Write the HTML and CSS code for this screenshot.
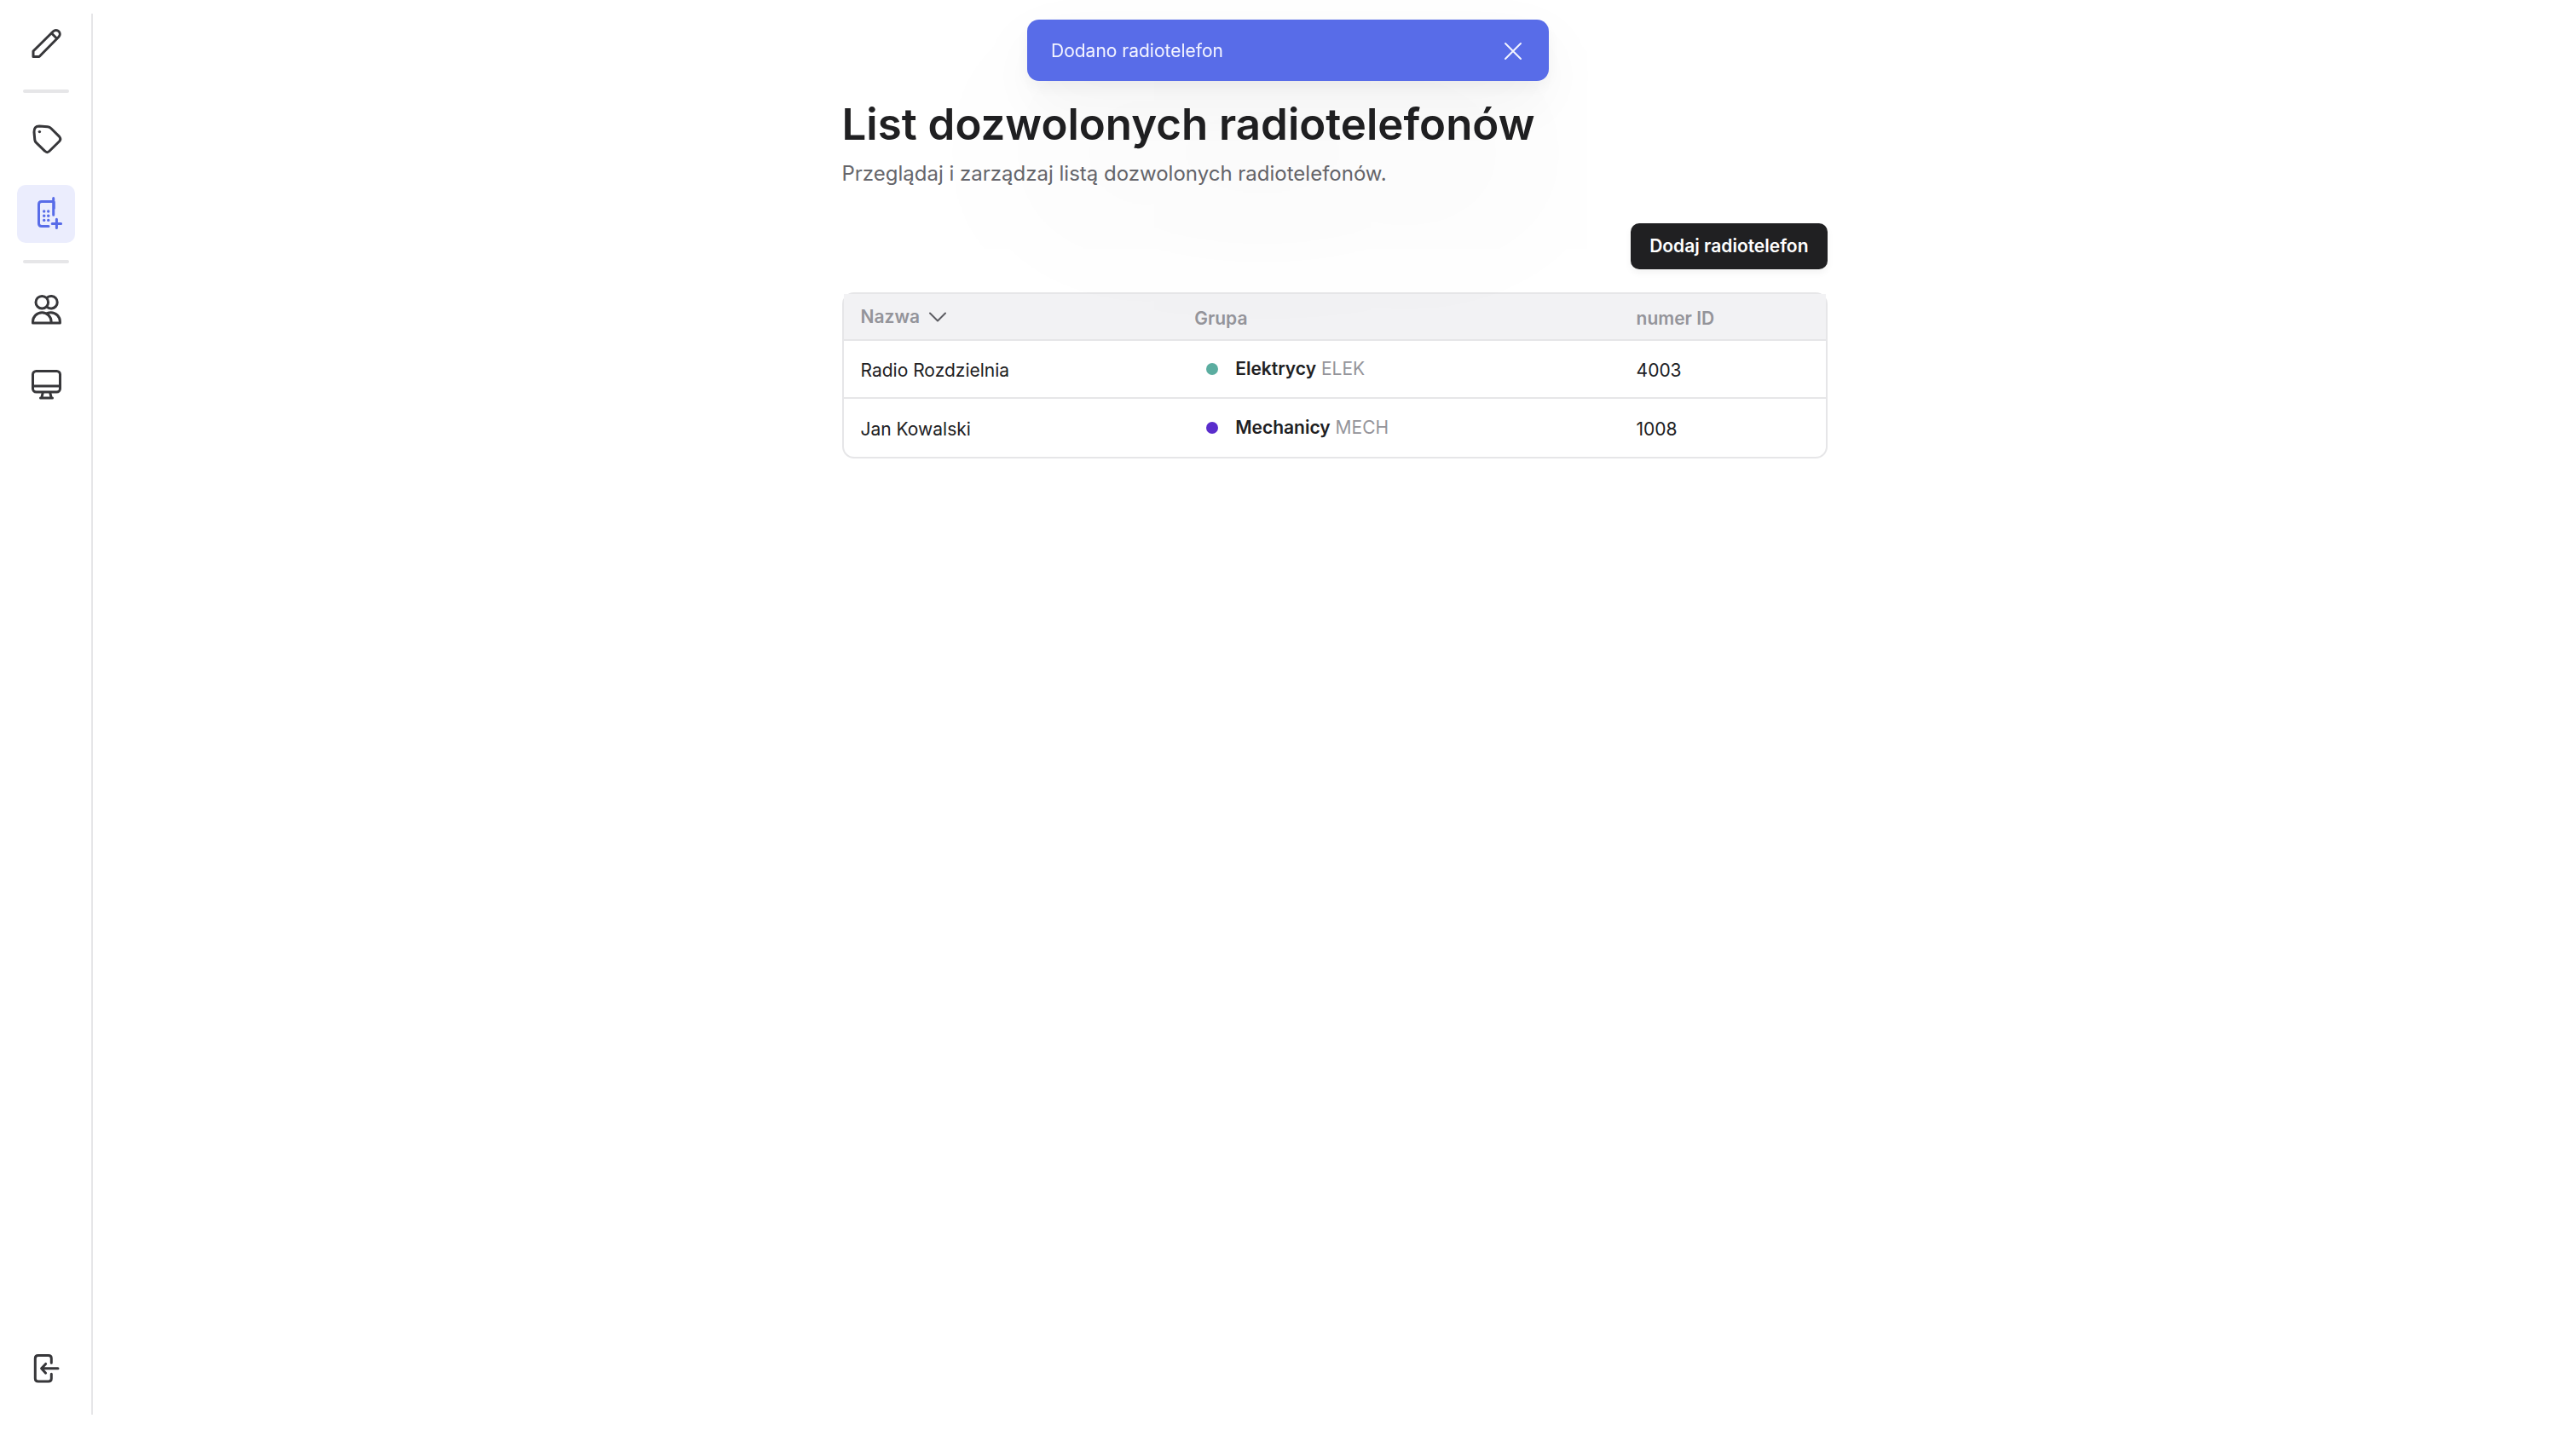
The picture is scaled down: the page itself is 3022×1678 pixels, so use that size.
FILE: index.html
```html
<!DOCTYPE html>
<html lang="pl">
<head>
<meta charset="utf-8">
<meta name="viewport" content="width=device-width, initial-scale=1">
<title>Radiotelefony</title>
<link rel="stylesheet" href="styles.css">
</head>
<body>
<div class="app">
  <nav class="sidebar" aria-label="Menu">
    <a class="nav-item" href="#edit" aria-label="Edycja">
      <svg class="icon" viewBox="0 0 40 40"><path d="M5 35.5V29L28.5 5.8A4.5 4.5 0 0 1 34.9 12.2L12 35.5Z"/><path d="M26.5 8L32.5 14"/></svg>
    </a>
    <hr class="divider">
    <a class="nav-item" href="#groups" aria-label="Grupy">
      <svg class="icon" viewBox="0 0 40 40"><path d="M12 5L22 5.8Q24.3 6 26 7.7L35.7 17.4Q38 20.2 35.7 22.7L24 34.3Q21.3 37 18.7 34.3L8.7 24.7Q7 23 6.8 21L6 12Q5.8 5 12 5Z"/><circle class="fill" cx="12.4" cy="11.6" r="1.7"/></svg>
    </a>
    <a class="nav-item active" href="#radios" aria-label="Radiotelefony" aria-current="page">
      <svg class="icon" viewBox="0 0 40 40"><path d="M28.7 1.5V21.3M29.3 6V13.5M28 5.5H14.8Q11.5 5.5 11.5 8.8V31.2Q11.5 34.5 14.8 34.5H23M32.4 26.2V36.6M27.2 31.4H37.6"/><g class="fill"><circle cx="17.7" cy="17" r="1.7"/><circle cx="22.7" cy="17" r="1.7"/><circle cx="17.7" cy="22.2" r="1.7"/><circle cx="22.7" cy="22.2" r="1.7"/><circle cx="17.7" cy="27.4" r="1.7"/><circle cx="22.7" cy="27.4" r="1.7"/></g></svg>
    </a>
    <hr class="divider">
    <a class="nav-item" href="#users" aria-label="Użytkownicy">
      <svg class="icon" viewBox="0 0 40 40"><circle cx="15.3" cy="11.7" r="7.3"/><path d="M21.5 5.9A7.3 7.3 0 1 1 21.5 17.5M4.5 36V34.5A10.8 10.8 0 0 1 26.1 34.5V36ZM21 24.7Q23.4 23.7 25.7 23.7A10.7 10.7 0 0 1 36.4 34.5V36H26"/></svg>
    </a>
    <a class="nav-item" href="#stations" aria-label="Stanowiska">
      <svg class="icon" viewBox="0 0 40 40"><rect x="4.5" y="4.5" width="32" height="24.5" rx="4"/><path d="M4.5 22H36.5M16.3 29.5L14.8 35.8M24.7 29.5L26.2 35.8M13.5 36H27.5"/></svg>
    </a>
    <a class="nav-item logout" href="#logout" aria-label="Wyloguj">
      <svg class="icon" viewBox="0 0 40 40"><path d="M26.3 13.3V8Q26.3 4.5 22.8 4.5H10.8Q7.3 4.5 7.3 8V31.5Q7.3 35 10.8 35H22.8Q26.3 35 26.3 31.5V26.3M34 19.8H15M19.6 14.4L14.6 19.8L19.6 25.2"/></svg>
    </a>
  </nav>
  <main class="main">
    <div class="content">
      <h1 class="title">List dozwolonych radiotelefonów</h1>
      <p class="subtitle">Przeglądaj i zarządzaj listą dozwolonych radiotelefonów.</p>
      <div class="actions"><button class="add-button" type="button">Dodaj radiotelefon</button></div>
      <div class="table-frame">
        <table class="table">
          <colgroup><col class="col-name"><col class="col-group"><col class="col-id"></colgroup>
          <thead>
            <tr>
              <th scope="col"><button class="sort" type="button">Nazwa <svg class="chevron" viewBox="0 0 24 24"><path d="M3 7.5L12 16.5L21 7.5"/></svg></button></th>
              <th scope="col">Grupa</th>
              <th scope="col">numer ID</th>
            </tr>
          </thead>
          <tbody>
            <tr>
              <td>Radio Rozdzielnia</td>
              <td class="group-cell"><div class="group"><span class="dot teal"></span><span><b class="group-name">Elektrycy</b> <span class="code">ELEK</span></span></div></td>
              <td>4003</td>
            </tr>
            <tr>
              <td>Jan Kowalski</td>
              <td class="group-cell"><div class="group"><span class="dot violet"></span><span><b class="group-name">Mechanicy</b> <span class="code">MECH</span></span></div></td>
              <td>1008</td>
            </tr>
          </tbody>
        </table>
      </div>
    </div>
  </main>
</div>
<div class="toast" role="status">
  <span>Dodano radiotelefon</span>
  <button class="toast-close" type="button" aria-label="Zamknij"><svg class="cross" viewBox="0 0 24 24"><path d="M3 3L21 21M21 3L3 21"/></svg></button>
</div>
</body>
</html>
```
FILE: styles.css
```css
* { box-sizing: border-box; }

body {
  margin: 0;
  background: #fff;
  color: #202022;
  font: 400 21px/28px Inter, sans-serif;
}

button { font: inherit; border: 0; cursor: pointer; }

.app { display: flex; min-height: 100vh; }

.sidebar {
  display: flex;
  flex-direction: column;
  align-items: center;
  gap: 20px;
  margin: 16px 0 18px;
  padding: 1px 19px 20px 20px;
  border-right: 2px solid #e6e6e8;
}

.nav-item {
  display: grid;
  place-items: center;
  width: 68px;
  height: 68px;
  border-radius: 10px;
  color: #37373a;
}
.nav-item.active { background: #ebedfd; color: #586ce8; }
.logout { margin-top: auto; }

.icon, .chevron, .cross {
  fill: none;
  stroke: currentColor;
  stroke-linecap: round;
  stroke-linejoin: round;
}
.icon { width: 40px; height: 40px; stroke-width: 3; }
.icon .fill { fill: currentColor; stroke: none; }

.divider {
  width: 54px;
  height: 4px;
  margin: 0;
  border: 0;
  border-radius: 2px;
  background: #e6e6e8;
}

.main {
  flex: 1;
  display: flex;
  justify-content: center;
  padding: 112px 24px 48px;
}
.content { width: 100%; max-width: 1156px; }

.title { margin: 0; font-size: 51px; line-height: 68px; font-weight: 600; }
.subtitle { margin: 8px 0 42px; font-size: 24px; line-height: 32px; color: #66666b; }

.actions { display: flex; justify-content: flex-end; margin-bottom: 27px; }
.add-button {
  height: 54px;
  padding: 0 22px;
  border-radius: 10px;
  background: #202022;
  color: #fff;
  font-weight: 600;
  box-shadow: 0 4px 8px rgba(0, 0, 0, .05);
}

.table-frame { border: 2px solid #e6e6e8; border-radius: 14px; }
.table { width: 100%; table-layout: fixed; border-collapse: separate; border-spacing: 0; }
.col-name { width: 34%; }
.col-group { width: 45%; }

.table th {
  height: 55px;
  padding: 4px 20px 0;
  background: #f2f2f4;
  border-bottom: 2px solid #e6e6e8;
  color: #94949a;
  font-weight: 600;
  text-align: left;
}
.table td { height: 68px; padding: 4px 20px 0; }
.table td.group-cell { padding-top: 0; }
.table tbody tr:not(:last-child) td { border-bottom: 2px solid #e6e6e8; }

.sort {
  display: flex;
  align-items: center;
  gap: 9px;
  padding: 0 0 4px;
  background: none;
  color: inherit;
}
.chevron { width: 24px; height: 24px; color: #5c5c61; stroke-width: 2; }

.group { display: flex; align-items: center; gap: 20px; padding-left: 14px; }
.dot { width: 14px; height: 14px; border-radius: 50%; }
.teal { background: #5bada0; }
.violet { background: #5a2dcc; }
.group-name { font-weight: 600; }
.code { color: #94949a; }

.toast {
  position: fixed;
  top: 23px;
  left: 50%;
  transform: translateX(-50%);
  display: flex;
  align-items: center;
  justify-content: space-between;
  width: min(612px, 90vw);
  height: 72px;
  padding: 2px 28px 0;
  border-radius: 14px;
  background: #586ce8;
  color: #f4f5ff;
  box-shadow: 0 8px 20px rgba(0, 0, 0, .05), 0 30px 80px rgba(0, 0, 0, .05), 0 120px 240px rgba(0, 0, 0, .07);
}
.toast-close { display: grid; place-items: center; padding: 2px; background: none; color: inherit; }
.cross { width: 24px; height: 24px; stroke-width: 2; }
```
